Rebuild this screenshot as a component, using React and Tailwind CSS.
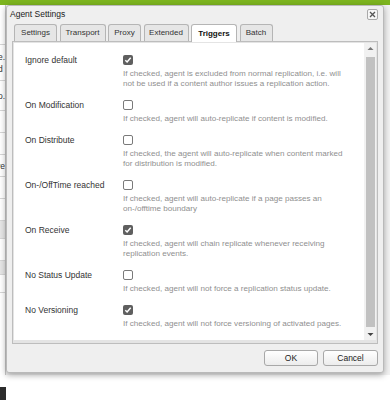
import React from 'react';

const tabs = [
  { label: 'Settings', w: 'w-[43px]' },
  { label: 'Transport', w: 'w-[46px]' },
  { label: 'Proxy', w: 'w-[33px]' },
  { label: 'Extended', w: 'w-[45px]' },
  { label: 'Triggers', w: 'w-[46px]', active: true },
  { label: 'Batch', w: 'w-[33px]' },
];

const triggers = [
  {
    label: 'Ignore default',
    checked: true,
    desc: ['If checked, agent is excluded from normal replication, i.e. will', 'not be used if a content author issues a replication action.'],
  },
  { label: 'On Modification', checked: false, desc: ['If checked, agent will auto-replicate if content is modified.'] },
  {
    label: 'On Distribute',
    checked: false,
    desc: ['If checked, the agent will auto-replicate when content marked', 'for distribution is modified.'],
  },
  {
    label: 'On-/OffTime reached',
    checked: false,
    desc: ['If checked, agent will auto-replicate if a page passes an', 'on-/offtime boundary'],
  },
  {
    label: 'On Receive',
    checked: true,
    desc: ['If checked, agent will chain replicate whenever receiving', 'replication events.'],
  },
  { label: 'No Status Update', checked: false, desc: ['If checked, agent will not force a replication status update.'] },
  { label: 'No Versioning', checked: true, desc: ['If checked, agent will not force versioning of activated pages.'] },
];

// rows of the page that peeks out behind the dialog
const bgRows = [
  { h: 'h-[40px]', t: '' },
  { h: 'h-[36px]', t: 'e.\nd' },
  { h: 'h-[30px]', t: 'o.' },
  { h: 'h-[22px]', t: '' },
  { h: 'h-[22px]', t: '' },
  { h: 'h-[22px]', t: 've' },
  { h: 'h-[22px]', t: '' },
  { h: 'h-[22px]', t: '' },
  { h: 'h-[18px]', t: '', shade: true },
  { h: 'h-[22px]', t: '' },
  { h: 'h-[14px]', t: '', shade: true },
  { h: 'h-[18px]', t: '' },
];

function Checkbox({ checked }) {
  if (checked) {
    return (
      <span className="flex h-[10px] w-[10px] items-center justify-center rounded-[2px] bg-[#5f5f5f]">
        <svg width="8" height="8" viewBox="0 0 8 8">
          <path d="M1.3 4.3 L3.1 6 L6.7 1.8" fill="none" stroke="#fff" strokeWidth="1.5" />
        </svg>
      </span>
    );
  }
  return <span className="block h-[10px] w-[10px] rounded-[2px] border border-[#7a7a7a] bg-white" />;
}

export default function App() {
  return (
    <div
      className="relative h-[400px] w-[390px] overflow-hidden bg-white"
      style={{ fontFamily: '"Liberation Sans", Arial, sans-serif' }}
    >
      {/* page behind the dialog */}
      <div className="h-[5px] w-full bg-[#7db51f]" />
      <div className="flex">
        <div className="flex w-[6px] flex-col border-r border-[#c8c8c8] bg-white">
          {bgRows.map((r, i) => (
            <div
              key={i}
              className={`${r.h} flex flex-col items-end justify-center overflow-hidden whitespace-pre border-b border-[#d6d6d6] text-[8.5px] leading-[12px] text-[#333] ${r.shade ? 'bg-[#e6e6e6]' : ''}`}
            >
              {r.t}
            </div>
          ))}
        </div>
        <div className="h-[370px] flex-1 bg-[#f2f2f2]" />
      </div>
      <div className="absolute bottom-0 left-0 h-[13px] w-[6px] bg-[#2c2c2c]" />

      {/* dialog */}
      <div className="absolute left-[6px] top-[5px] flex h-[368px] w-[378px] flex-col rounded-[3px] border border-[#b9b9b9] bg-[#efefef] shadow-[0_2px_6px_rgba(0,0,0,0.35)]">
        {/* title bar */}
        <div className="flex h-[17px] shrink-0 items-center justify-between pl-[3px] pr-[5px]">
          <span className="text-[8.5px] text-[#222]">Agent Settings</span>
          <span className="flex h-[11px] w-[11px] items-center justify-center rounded-[2px] border border-[#a9a9a9] bg-[#f6f6f6]">
            <svg width="7" height="7" viewBox="0 0 7 7">
              <path d="M1 1 L6 6 M6 1 L1 6" stroke="#555" strokeWidth="1.3" />
            </svg>
          </span>
        </div>

        {/* tabs */}
        <div className="flex h-[18px] shrink-0 items-end gap-[2.5px] pl-[7px]">
          {tabs.map(t => (
            <div
              key={t.label}
              className={`${t.w} flex items-center justify-center rounded-t-[3px] border border-b-0 border-[#b5b5b5] text-[8px] ${t.active ? 'relative top-[1px] h-[18px] bg-white font-bold text-[#111]' : 'h-[17px] bg-[#e6e6e6] text-[#333]'}`}
            >
              {t.label}
            </div>
          ))}
        </div>

        {/* panel */}
        <div className="mx-[5px] flex h-[303px] shrink-0 border border-[#bdbdbd] bg-[#e4e4e4] p-[1px] pb-[3px]">
          <div className="flex flex-1 bg-white">
            <div className="flex-1 pl-[11px] pt-[12px]">
              {triggers.map(row => (
                <div key={row.label} className="flex pb-[11px]">
                  <div className="w-[98px] text-[8.5px] leading-[10px] text-[#333]">{row.label}</div>
                  <div className="flex flex-col">
                    <Checkbox checked={row.checked} />
                    <div className="mt-[4px] text-[8.1px] leading-[10px] text-[#8f8f8f]">
                      {row.desc.map(line => (
                        <div key={line} className="h-[10px] whitespace-nowrap">
                          {line}
                        </div>
                      ))}
                    </div>
                  </div>
                </div>
              ))}
            </div>
            {/* scrollbar */}
            <div className="flex w-[12px] flex-col items-center bg-[#f1f1f1] py-[3px]">
              <svg width="7" height="5" viewBox="0 0 7 5">
                <path d="M0.5 4 L3.5 1 L6.5 4 Z" fill="#777" />
              </svg>
              <div className="mt-[6px] w-[9px] flex-1 bg-[#c1c1c1]" />
              <svg width="7" height="5" viewBox="0 0 7 5" className="mt-[5px]">
                <path d="M0.5 1 L3.5 4 L6.5 1 Z" fill="#444" />
              </svg>
            </div>
          </div>
        </div>

        {/* footer */}
        <div className="flex flex-1 items-center justify-end gap-[5px] pr-[5px]">
          <button className="h-[16px] w-[54px] rounded-[3px] border border-[#a8a8a8] bg-gradient-to-b from-white to-[#ececec] text-[8.5px] text-[#222]">
            OK
          </button>
          <button className="h-[16px] w-[55px] rounded-[3px] border border-[#a8a8a8] bg-gradient-to-b from-white to-[#ececec] text-[8.5px] text-[#222]">
            Cancel
          </button>
        </div>
      </div>
    </div>
  );
}
